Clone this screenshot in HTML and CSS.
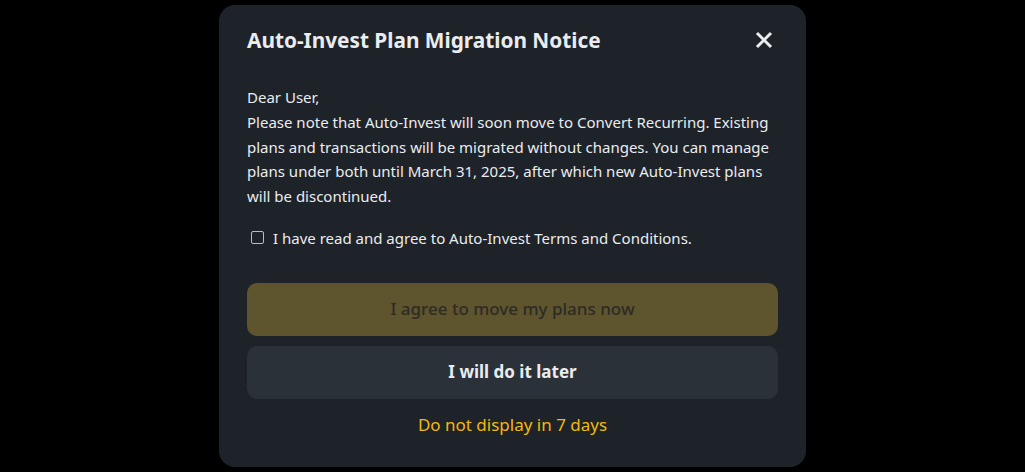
FILE: index.html
```html
<!DOCTYPE html>
<html lang="en">
<head>
    <meta charset="UTF-8">
    <meta name="viewport" content="width=device-width, initial-scale=1.0">
    <title>Auto-Invest Plan Migration Notice</title>
    <link rel="stylesheet" href="styles.css">
</head>
<body>
    <div class="overlay">
        <div class="modal">
            <div class="modal-header">
                <h2 class="modal-title">Auto-Invest Plan Migration Notice</h2>
                <button class="close-btn" type="button" aria-label="Close">
                    <svg width="20" height="20" viewBox="0 0 20 20">
                        <path d="M3 3 L17 17 M17 3 L3 17" stroke="#eaecef" stroke-width="3" stroke-linecap="butt"/>
                    </svg>
                </button>
            </div>

            <div class="modal-body">
                <p>Dear User,</p>
                <p>Please note that Auto-Invest will soon move to Convert Recurring. Existing plans and transactions will be migrated without changes. You can manage plans under both until March 31, 2025, after which new Auto-Invest plans will be discontinued.</p>
            </div>

            <label class="agree">
                <input type="checkbox" class="agree-box">
                <span>I have read and agree to Auto-Invest Terms and Conditions.</span>
            </label>

            <div class="actions">
                <button class="btn btn-primary" type="button" disabled>I agree to move my plans now</button>
                <button class="btn btn-secondary" type="button">I will do it later</button>
                <a class="link-later" href="#">Do not display in 7 days</a>
            </div>
        </div>
    </div>
</body>
</html>
```

FILE: styles.css
```css
body {
    margin: 0;
    background-color: #000;
    font-family: "Noto Sans", Arial, sans-serif;
    color: #eaecef;
}

.overlay {
    display: flex;
    justify-content: center;
    padding-top: 5px;
    height: 462px;
}

.modal {
    width: 531px;
    padding: 19px 28px 30px;
    background-color: #1e2329;
    border-radius: 16px;
    display: flex;
    flex-direction: column;
}

.modal-header {
    display: flex;
    align-items: center;
    justify-content: space-between;
    height: 32px;
}

.modal-title {
    margin: 0;
    font-size: 20.8px;
    font-weight: 700;
    line-height: 32px;
    color: #eaecef;
}

.close-btn {
    background: none;
    border: none;
    padding: 0;
    margin-right: 4px;
    width: 20px;
    height: 20px;
    cursor: pointer;
}

.modal-body {
    margin-top: 29px;
    font-size: 15px;
    line-height: 24.75px;
}

.modal-body p {
    margin: 0;
}

.agree {
    display: flex;
    align-items: center;
    gap: 9px;
    margin-top: 17px;
    padding-left: 4px;
    font-size: 15px;
    line-height: 24px;
}

.agree-box {
    appearance: none;
    margin: 0;
    width: 13px;
    height: 13px;
    border: 1px solid #b7bdc6;
    border-radius: 2px;
    background: transparent;
}

.actions {
    display: flex;
    flex-direction: column;
    gap: 10px;
    margin-top: 33px;
}

.btn {
    height: 53px;
    padding: 0 0 2px;
    border: none;
    border-radius: 10px;
    font-family: inherit;
    font-size: 17px;
}

.btn-primary,
.btn-primary:disabled {
    background-color: #5e552e;
    color: #2d2b25;
    font-weight: 500;
}

.btn-secondary {
    background-color: #2b3139;
    color: #eaecef;
    font-weight: 700;
}

.link-later {
    margin-top: 4px;
    text-align: center;
    font-size: 17px;
    line-height: 24px;
    color: #f0b90b;
    text-decoration: none;
}
```
